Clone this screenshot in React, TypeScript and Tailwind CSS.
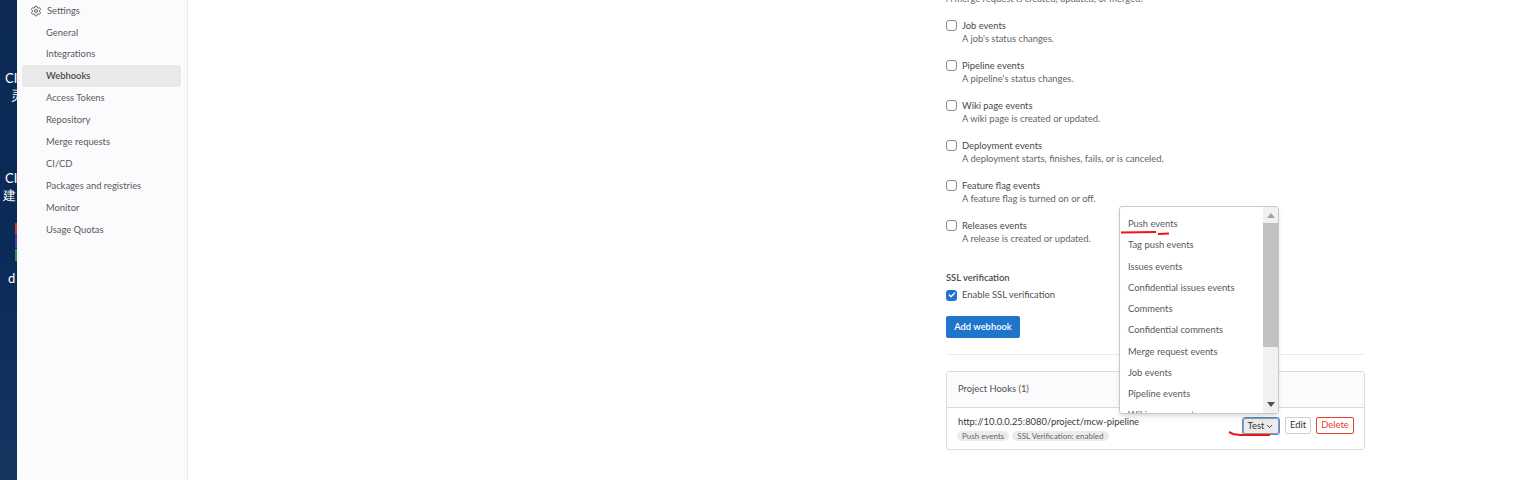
import { Settings, ChevronDown, Check } from 'lucide-react';

const navItems = ['General', 'Integrations', 'Webhooks', 'Access Tokens', 'Repository', 'Merge requests', 'CI/CD', 'Packages and registries', 'Monitor', 'Usage Quotas'];

const triggers = [
  { name: 'Job events', help: "A job's status changes." },
  { name: 'Pipeline events', help: "A pipeline's status changes." },
  { name: 'Wiki page events', help: 'A wiki page is created or updated.' },
  { name: 'Deployment events', help: 'A deployment starts, finishes, fails, or is canceled.' },
  { name: 'Feature flag events', help: 'A feature flag is turned on or off.' },
  { name: 'Releases events', help: 'A release is created or updated.' },
];

const testEvents = ['Push events', 'Tag push events', 'Issues events', 'Confidential issues events', 'Comments', 'Confidential comments', 'Merge request events', 'Job events', 'Pipeline events', 'Wiki page events'];

function DesktopStrip() {
  return (
    <div className="relative w-[17px] shrink-0 overflow-hidden bg-gradient-to-b from-[#0c2a52] via-[#0a2a58] to-[#14365f] text-[13px] leading-[17px] text-white">
      <span className="absolute left-[5px] top-[70px]">CI</span>
      <span className="absolute left-[11px] top-[87px]">灵</span>
      <span className="absolute left-[5px] top-[170px]">CI</span>
      <span className="absolute left-[3px] top-[187px]">建</span>
      <span className="absolute left-[8px] top-[270px]">d</span>
      <div className="absolute left-[15px] top-[223px] h-[12px] w-[2px] bg-[#c0394b]" />
      <div className="absolute left-[15px] top-[236px] h-[12px] w-[2px] bg-[#4a3f9a]" />
      <div className="absolute left-[15px] top-[249px] h-[12px] w-[2px] bg-[#2f8f4e]" />
    </div>
  );
}

function Sidebar() {
  return (
    <aside className="w-[171px] shrink-0 border-r border-[#e9e9e9] bg-[#fbfafd] pl-[5px] pr-[6px] text-[#5a5a5a]">
      <div className="flex h-[21.6px] items-center pl-[8px]">
        <Settings className="mr-[5px] h-[12px] w-[12px] text-[#555]" strokeWidth={1.8} />
        <span>Settings</span>
      </div>
      {navItems.map((item) => (
        <div
          key={item}
          className={`flex h-[21.95px] items-center rounded-[3px] pl-[24px] ${item === 'Webhooks' ? 'bg-[#e9e9ea] font-semibold text-[#4a4a4a]' : ''}`}
        >
          {item}
        </div>
      ))}
    </aside>
  );
}

function TestDropdown() {
  return (
    <div className="absolute left-[1119px] top-[206px] flex h-[208px] w-[160px] overflow-hidden rounded-[3px] border border-[#c9c9c9] bg-white shadow-md">
      <ul className="flex-1 overflow-hidden pl-[8px] pt-[6.5px] text-[#5a5a5a]">
        {testEvents.map((ev) => (
          <li key={ev} className="flex h-[21.25px] items-center whitespace-nowrap">{ev}</li>
        ))}
      </ul>
      <div className="flex w-[15px] flex-col items-center bg-[#f1f1f1]">
        <div className="mt-[6px] h-0 w-0 border-x-[4px] border-b-[5px] border-x-transparent border-b-[#a3a3a3]" />
        <div className="mt-[5px] h-[124px] w-full bg-[#c1c1c1]" />
        <div className="mt-auto mb-[6px] h-0 w-0 border-x-[4px] border-t-[5px] border-x-transparent border-t-[#505050]" />
      </div>
    </div>
  );
}

function Scribbles() {
  return (
    <svg className="absolute left-0 top-0 h-[480px] w-[1515px]" viewBox="0 0 1515 480" fill="none">
      <path d="M1121 232.5 L1156 232 M1158 234 L1169 233.5" stroke="#f01414" strokeWidth="2" />
      <path d="M1229 432 L1233 434 L1240 435 L1270 435" stroke="#f01414" strokeWidth="2" />
    </svg>
  );
}

export default function App() {
  return (
    <div className="relative flex h-[480px] w-[1515px] overflow-hidden bg-white text-[9.4px] font-['Lato','Open_Sans',sans-serif] text-[#4f4f4f]">
      <DesktopStrip />
      <Sidebar />
      <main className="w-[419px] shrink-0 ml-[758px]">
        <div className="-mt-[8px] mb-[1px] h-[20px] whitespace-nowrap text-[#666]">A merge request is created, updated, or merged.</div>
        <div className="flex flex-col gap-[10px]">
          {triggers.map((t) => (
            <div key={t.name} className="flex h-[30px]">
              <div className="mr-[5px] mt-[7px] h-[11px] w-[11px] rounded-[3px] border border-[#8a8a8a] bg-white" />
              <div className="pt-[6px] leading-[13px]">
                <div className="text-[#4a4a4a]">{t.name}</div>
                <div className="text-[#666]">{t.help}</div>
              </div>
            </div>
          ))}
        </div>
        <div className="mt-[28px] font-semibold leading-[14px] text-[#4a4a4a]">SSL verification</div>
        <div className="mt-[3px] flex h-[14px] items-center">
          <span className="mr-[5px] flex h-[11px] w-[11px] items-center justify-center rounded-[3px] bg-[#1f75cb]">
            <Check className="h-[8px] w-[8px] text-white" strokeWidth={4} />
          </span>
          Enable SSL verification
        </div>
        <button className="mt-[14px] h-[22px] w-[74px] rounded-[2px] bg-[#1f75cb] pt-[1px] font-semibold text-white">Add webhook</button>
        <div className="mt-[16px] border-t border-[#ececec]" />
        <section className="mt-[16px] h-[79px] rounded-[3px] border border-[#dcdcdc]">
          <div className="flex h-[36px] items-center border-b border-[#dcdcdc] bg-[#fbfafd] pb-[1px] pl-[11px]">Project Hooks (1)</div>
          <div className="flex items-start justify-between pl-[11px] pr-[10px] pt-[7px]">
            <div>
              <div className="leading-[13px] text-[#3a3a3a]">http://10.0.0.25:8080/project/mcw-pipeline</div>
              <div className="-ml-[1px] mt-[3px] flex gap-[3px] text-[8px] text-[#666]">
                <span className="flex h-[10px] items-center rounded-full bg-[#ececef] px-[5px]">Push events</span>
                <span className="flex h-[10px] items-center rounded-full bg-[#ececef] px-[5px]">SSL Verification: enabled</span>
              </div>
            </div>
            <div className="mt-[2px] flex items-center">
              <button className="flex h-[16px] w-[36px] items-center justify-center rounded-[2px] border border-[#9a9a9a] bg-[#ececec] pt-[1px] text-[#333] outline outline-[1.5px] outline-[#428fdc]">
                Test<ChevronDown className="ml-[1px] h-[9px] w-[9px]" strokeWidth={2.5} />
              </button>
              <button className="ml-[6px] h-[17px] w-[26px] rounded-[2px] border border-[#cfcfcf] bg-white text-[#333]">Edit</button>
              <button className="ml-[5px] h-[17px] w-[38px] rounded-[2px] border border-[#e5402a] bg-white text-[#e5402a]">Delete</button>
            </div>
          </div>
        </section>
      </main>
      <TestDropdown />
      <Scribbles />
    </div>
  );
}
